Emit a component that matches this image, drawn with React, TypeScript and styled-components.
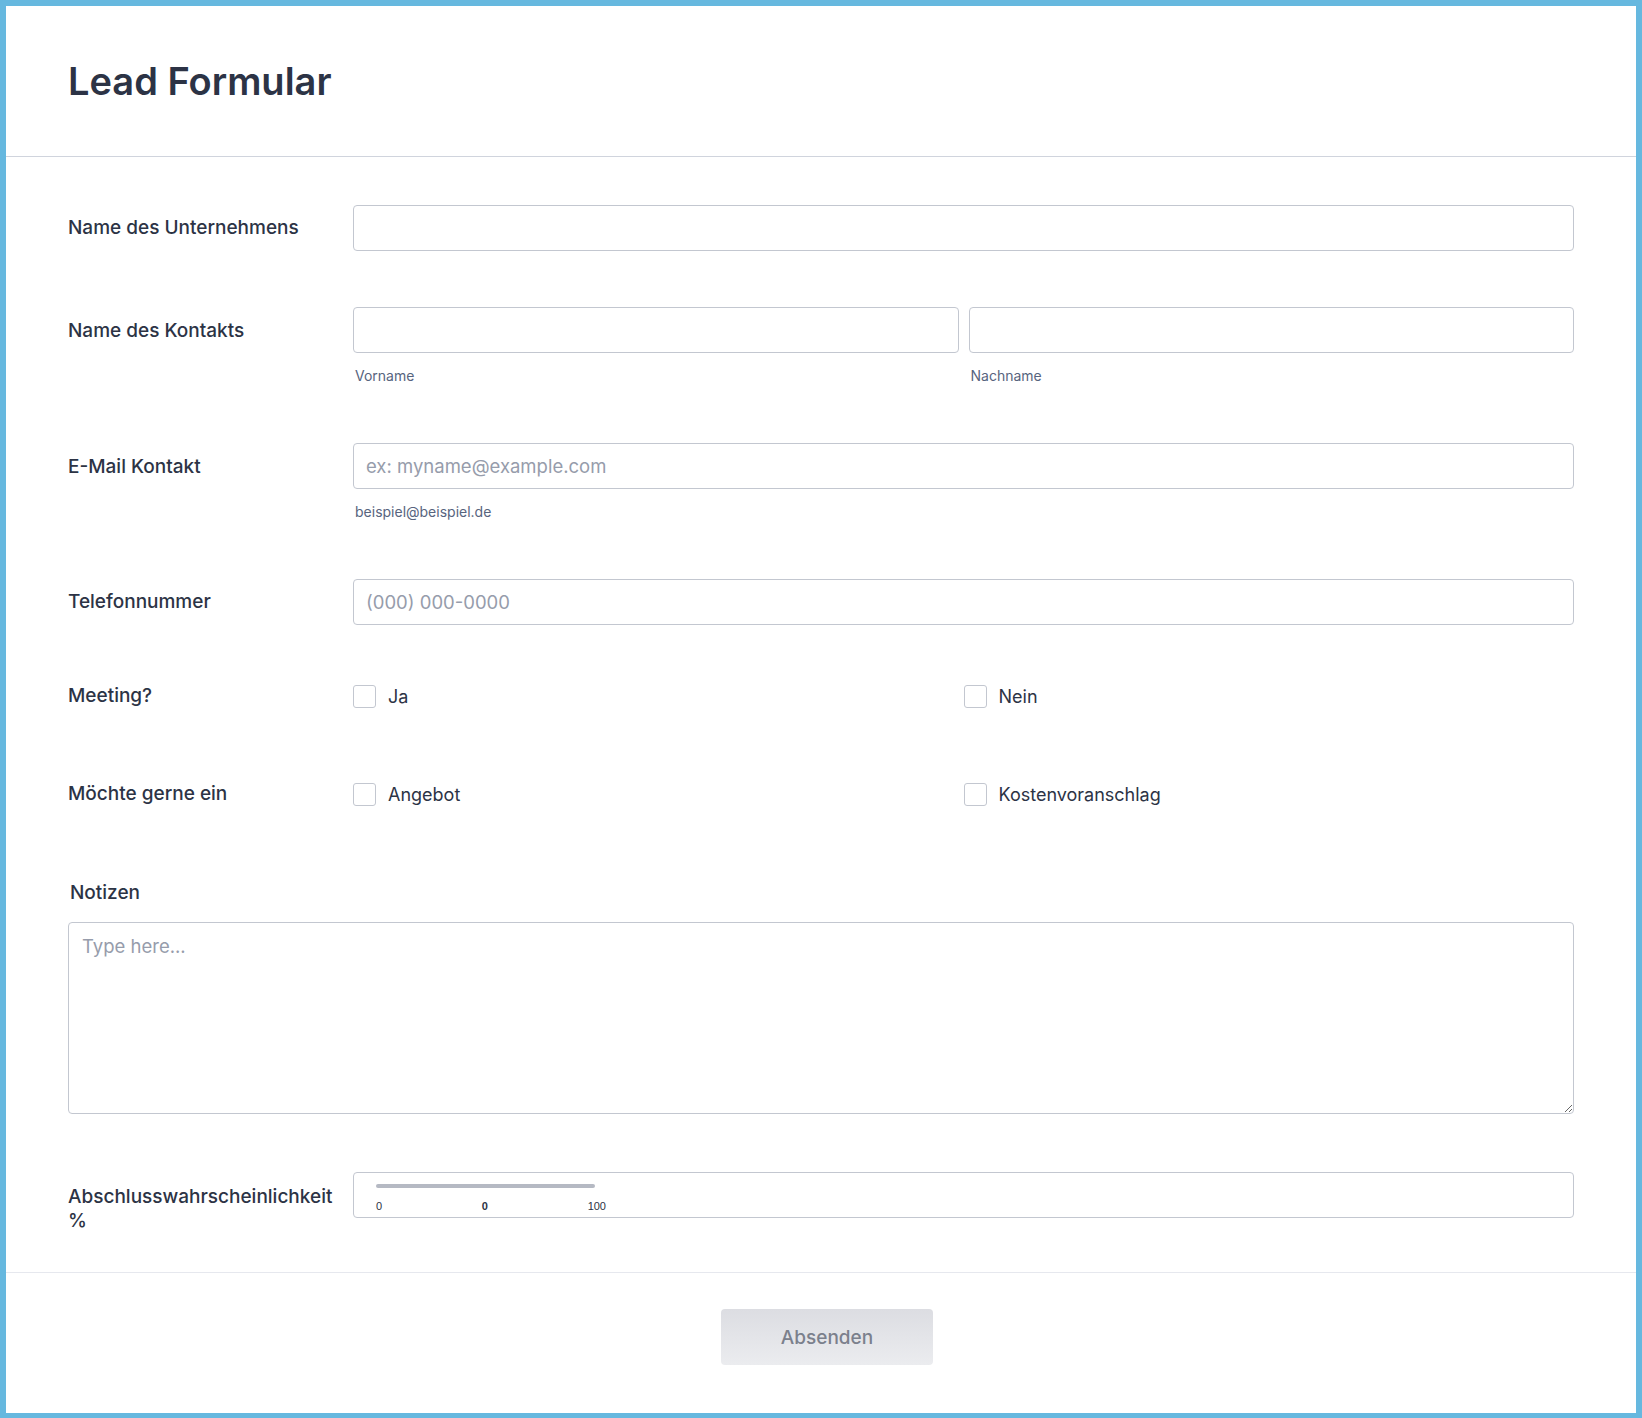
import React from 'react'
import styled, { createGlobalStyle } from 'styled-components'

const GlobalStyle = createGlobalStyle`
  html, body {
    margin: 0;
    padding: 0;
    background: #ffffff;
  }
  body {
    font-family: Inter, "Noto Sans", sans-serif;
    color: #2c3345;
  }
  * {
    box-sizing: border-box;
  }
`

const Frame = styled.div`
  width: 1642px;
  border: 6px solid #66b8df;
  background: #ffffff;
`

const Header = styled.header`
  height: 151px;
  padding-left: 62px;
  display: flex;
  align-items: center;
  border-bottom: 1px solid #d0d4dd;
  h1 {
    margin: 0;
    font-size: 38px;
    font-weight: 600;
    color: #2c3345;
  }
`

const Body = styled.div`
  padding: 20px 62px 11px;
`

const Row = styled.div`
  display: grid;
  grid-template-columns: 285px 1fr;
  padding: 28px 0;
`

const FullRow = styled.div`
  padding: 30px 0;
`

const Label = styled.label<{ $top: number }>`
  display: block;
  padding-top: ${p => p.$top}px;
  padding-right: 16px;
  font-size: 19px;
  font-weight: 500;
  line-height: 24px;
  color: #2c3345;
`

const NoteLabel = styled.label`
  display: block;
  padding-left: 2px;
  margin-bottom: 15px;
  font-size: 19px;
  font-weight: 500;
  line-height: 28px;
  color: #2c3345;
`

const Input = styled.input`
  display: block;
  width: 100%;
  height: 46px;
  padding: 0 12px;
  border: 1px solid #c3c7d0;
  border-radius: 4px;
  font-family: Inter, "Noto Sans", sans-serif;
  font-size: 18.5px;
  color: #2c3345;
  background: #fff;
  outline: none;
  &::placeholder {
    color: #969cab;
  }
`

const SubLabel = styled.div`
  margin-top: 12px;
  padding-left: 2px;
  font-size: 14px;
  line-height: 22px;
  color: #57647e;
`

const NameGrid = styled.div`
  display: grid;
  grid-template-columns: 1fr 1fr;
  gap: 10px;
`

const CheckGrid = styled.div`
  display: grid;
  grid-template-columns: 1fr 1fr;
  padding-bottom: 12px;
`

const Option = styled.label`
  display: flex;
  align-items: center;
  gap: 12px;
  height: 30px;
  font-size: 18px;
  color: #2c3345;
`

const Box = styled.span`
  width: 23px;
  height: 23px;
  border: 1px solid #c3c7d0;
  border-radius: 3px;
  background: #fff;
  flex-shrink: 0;
`

const TextArea = styled.textarea`
  display: block;
  width: 100%;
  height: 192px;
  padding: 12px 13px;
  border: 1px solid #c3c7d0;
  border-radius: 4px;
  font-family: Inter, "Noto Sans", sans-serif;
  font-size: 18.5px;
  color: #2c3345;
  outline: none;
  resize: vertical;
  &::placeholder {
    color: #969cab;
  }
`

const SliderBox = styled.div`
  height: 46px;
  padding: 11px 22px 0;
  border: 1px solid #c3c7d0;
  border-radius: 4px;
`

const Track = styled.div`
  width: 219px;
  height: 4px;
  border-radius: 2px;
  background: #b5b9c3;
`

const Scale = styled.div`
  display: flex;
  justify-content: space-between;
  width: 230px;
  margin-top: 11px;
  font-family: "Liberation Sans", Arial, sans-serif;
  font-size: 11px;
  line-height: 14px;
  color: #2c3345;
  b {
    font-weight: 700;
  }
`

const Footer = styled.div`
  display: flex;
  justify-content: center;
  padding: 36px 0 48px 12px;
  border-top: 1px solid #e6e8ee;
`

const Submit = styled.button`
  width: 212px;
  height: 56px;
  border: none;
  border-radius: 4px;
  background: linear-gradient(to bottom, #dcdde2, #ebecef);
  font-family: Inter, "Noto Sans", sans-serif;
  font-size: 19px;
  font-weight: 500;
  color: #7b808c;
`

const Check = ({ text }: { text: string }) => (
  <Option>
    <Box />
    {text}
  </Option>
)

const App: React.FC = () => {
  return (
    <>
      <GlobalStyle />
      <Frame>
        <Header>
          <h1>Lead Formular</h1>
        </Header>
        <Body>
          <Row>
            <Label $top={11}>Name des Unternehmens</Label>
            <Input type="text" />
          </Row>
          <Row>
            <Label $top={12}>Name des Kontakts</Label>
            <NameGrid>
              <div>
                <Input type="text" />
                <SubLabel>Vorname</SubLabel>
              </div>
              <div>
                <Input type="text" />
                <SubLabel>Nachname</SubLabel>
              </div>
            </NameGrid>
          </Row>
          <Row>
            <Label $top={12}>E-Mail Kontakt</Label>
            <div>
              <Input type="email" placeholder="ex: myname@example.com" />
              <SubLabel>beispiel@beispiel.de</SubLabel>
            </div>
          </Row>
          <Row>
            <Label $top={11}>Telefonnummer</Label>
            <Input type="tel" placeholder="(000) 000-0000" />
          </Row>
          <Row>
            <Label $top={3}>Meeting?</Label>
            <CheckGrid>
              <Check text="Ja" />
              <Check text="Nein" />
            </CheckGrid>
          </Row>
          <Row>
            <Label $top={3}>Möchte gerne ein</Label>
            <CheckGrid>
              <Check text="Angebot" />
              <Check text="Kostenvoranschlag" />
            </CheckGrid>
          </Row>
          <FullRow>
            <NoteLabel>Notizen</NoteLabel>
            <TextArea placeholder="Type here..." />
          </FullRow>
          <Row>
            <Label $top={13}>Abschlusswahrscheinlichkeit %</Label>
            <SliderBox>
              <Track />
              <Scale>
                <span>0</span>
                <b>0</b>
                <span>100</span>
              </Scale>
            </SliderBox>
          </Row>
        </Body>
        <Footer>
          <Submit>Absenden</Submit>
        </Footer>
      </Frame>
    </>
  )
}

export default App
